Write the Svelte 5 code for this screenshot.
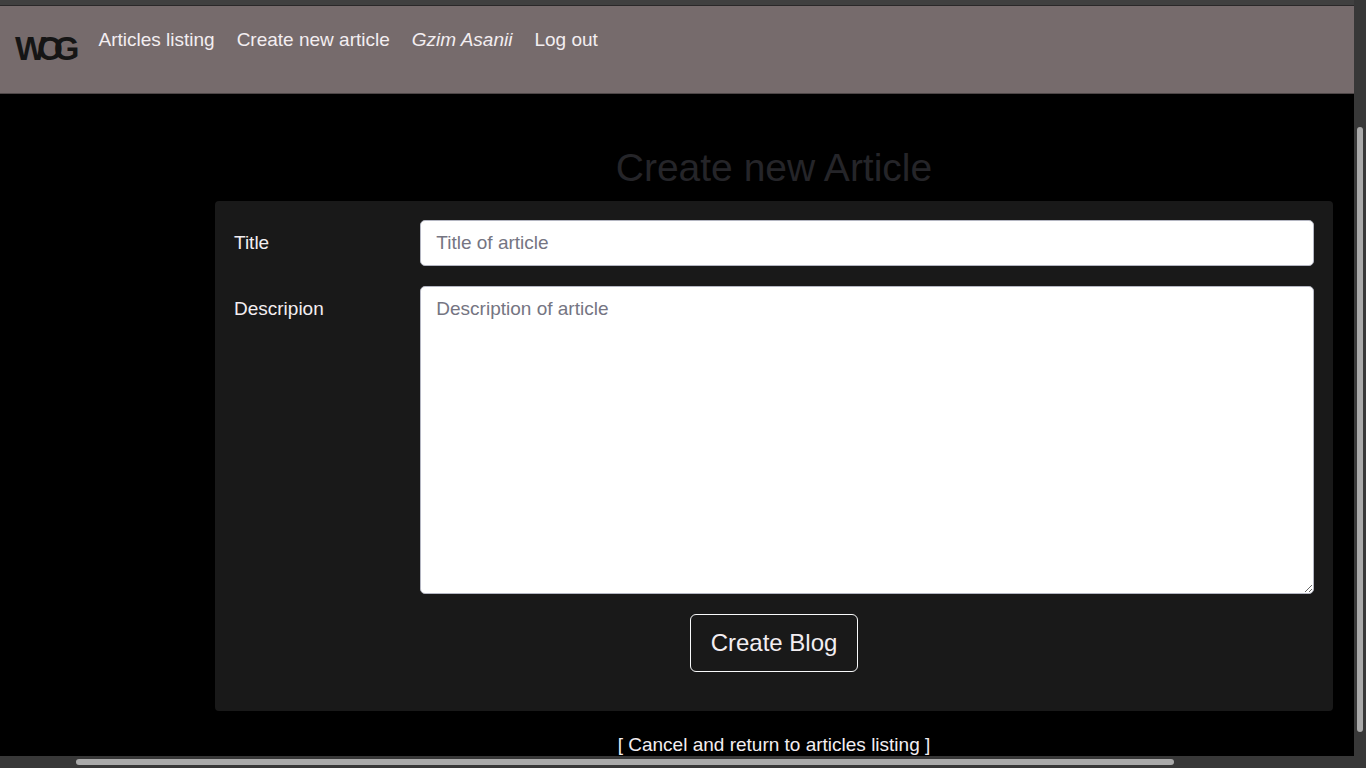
<script>
  let title = $state('');
  let description = $state('');

  const links = [
    { label: 'Articles listing', href: '#articles' },
    { label: 'Create new article', href: '#new' },
    { label: 'Gzim Asanii', href: '#profile', user: true },
    { label: 'Log out', href: '#logout' }
  ];
</script>

<div class="window">
  <div class="view">
    <div class="chrome"></div>
    <header>
      <a class="logo" href="#home">WOG</a>
      <nav>
        {#each links as link}
          <a href={link.href} class:user={link.user}>{link.label}</a>
        {/each}
      </nav>
    </header>

    <main>
      <h1>Create new Article</h1>
      <form onsubmit={(e) => e.preventDefault()}>
        <div class="row">
          <label for="title">Title</label>
          <div class="field">
            <input id="title" type="text" placeholder="Title of article" bind:value={title} />
          </div>
        </div>
        <div class="row">
          <label for="description">Descripion</label>
          <div class="field">
            <textarea id="description" rows="11" placeholder="Description of article" bind:value={description}></textarea>
          </div>
        </div>
        <button type="submit">Create Blog</button>
      </form>
      <p class="cancel">[ <a href="#articles">Cancel and return to articles listing</a> ]</p>
    </main>
  </div>

  <div class="bar vertical"><div class="thumb"></div></div>
  <div class="bar horizontal"><div class="thumb"></div></div>
</div>

<style>
  :global(body) {
    margin: 0;
    background: #000;
  }

  .window {
    display: grid;
    grid-template-columns: minmax(0, 1fr) 12px;
    grid-template-rows: minmax(0, 1fr) 12px;
    height: 100vh;
    font: 19px/28px 'Liberation Sans', Arial, sans-serif;
    color: #f3eef1;
  }

  .view {
    overflow: hidden;
    background: #000;
  }

  .chrome {
    height: 5px;
    background: #404040;
    border-bottom: 1px solid #2a2829;
  }

  header {
    display: flex;
    align-items: flex-start;
    gap: 28px;
    box-sizing: border-box;
    height: 88px;
    padding: 20px 15px;
    background: #766b6c;
    border-bottom: 1px solid #4e4748;
  }

  a {
    color: inherit;
    text-decoration: none;
  }

  .logo {
    padding-top: 3px;
    font-size: 33px;
    line-height: 40px;
    font-weight: bold;
    letter-spacing: -9px;
    color: #151515;
  }

  nav {
    display: flex;
    gap: 22px;
  }

  .user {
    font-style: italic;
  }

  main {
    padding: 50px 21px 0 215px;
  }

  h1 {
    margin: 0 0 9px;
    font-size: 39px;
    line-height: 48px;
    font-weight: normal;
    text-align: center;
    color: #252529;
  }

  form {
    display: flex;
    flex-direction: column;
    gap: 20px;
    padding: 19px 0 39px;
    border-radius: 4px;
    background: #191919;
  }

  .row {
    display: grid;
    grid-template-columns: minmax(0, 1fr) minmax(0, 5fr);
  }

  label {
    padding: 9px 19px;
  }

  .field {
    padding: 0 19px;
  }

  input,
  textarea {
    display: block;
    box-sizing: border-box;
    width: 100%;
    margin: 0;
    padding: 8px 15px;
    border: 1px solid #b4b6c2;
    border-radius: 5px;
    background: #fff;
    font: inherit;
    color: #495057;
    outline: none;
  }

  input {
    height: 46px;
  }

  textarea {
    height: 308px;
    resize: vertical;
  }

  ::placeholder {
    color: #757582;
    opacity: 1;
  }

  button {
    align-self: center;
    padding: 10px 20px;
    border: 1px solid #f8f9fa;
    border-radius: 6px;
    background: transparent;
    font: inherit;
    font-size: 24px;
    line-height: 36px;
    color: #f3eef1;
  }

  .cancel {
    margin: 20px 0;
    text-align: center;
    white-space: nowrap;
  }

  .bar {
    display: flex;
    background: #383838;
  }

  .thumb {
    flex: 1;
    border-radius: 3px;
    background: #aaa;
  }

  .vertical {
    flex-direction: column;
    padding: 127px 3px 24px;
  }

  .horizontal {
    grid-column: 1 / -1;
    padding: 3px 192px 3px 76px;
  }
</style>
